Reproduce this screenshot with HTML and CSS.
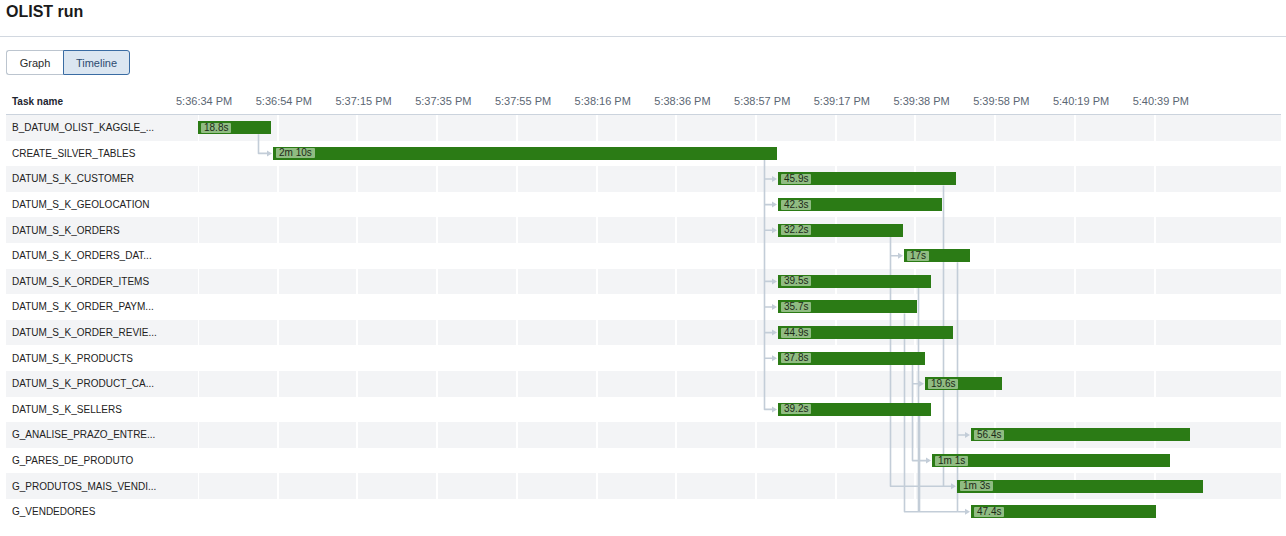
FILE: index.html
```html
<!DOCTYPE html>
<html>
<head>
<meta charset="utf-8">
<title>OLIST run</title>
<link rel="stylesheet" href="styles.css">
</head>
<body>
<header class="page-title"><h1>OLIST run</h1></header>
<div class="tabs">
  <button class="tab tab-graph">Graph</button>
  <button class="tab tab-timeline">Timeline</button>
</div>
<section class="timeline">
  <div class="thead">
    <div class="name-col th-name">Task name</div>
    <div class="ticks">
      <span class="tick">5:36:34 PM</span><span class="tick">5:36:54 PM</span><span class="tick">5:37:15 PM</span><span class="tick">5:37:35 PM</span><span class="tick">5:37:55 PM</span><span class="tick">5:38:16 PM</span><span class="tick">5:38:36 PM</span><span class="tick">5:38:57 PM</span><span class="tick">5:39:17 PM</span><span class="tick">5:39:38 PM</span><span class="tick">5:39:58 PM</span><span class="tick">5:40:19 PM</span><span class="tick">5:40:39 PM</span>
    </div>
  </div>
  <div class="rows">
    <svg class="links" width="1275" height="410" viewBox="6 115 1275 410" xmlns="http://www.w3.org/2000/svg">
      <g fill="none" stroke="#c3cdd8" stroke-width="1.6" stroke-linejoin="round">
        <path d="M258.5 134.3 V153.4 H267"/>
        <path d="M764.5 159.9 V409.4 H772"/>
        <path d="M764.5 179 H772 M764.5 204.6 H772 M764.5 230.2 H772 M764.5 281.4 H772 M764.5 307 H772 M764.5 332.6 H772 M764.5 358.2 H772"/>
        <path d="M890.5 236.7 V486.2 H951 M890.5 255.8 H898"/>
        <path d="M943.5 185.5 V486.2"/>
        <path d="M957.5 262.3 V511.8 H965 M957.5 435 H965"/>
        <path d="M918.5 287.9 V511.8"/>
        <path d="M904.5 313.5 V511.8 H957"/>
        <path d="M912.5 364.7 V460.6 H926 M912.5 383.8 H919"/>
        <path d="M919.5 415.9 V511.8"/>
      </g>
      <g fill="#c3cdd8">
        <polygon points="267,150.4 272,153.4 267,156.4"/>
        <polygon points="772,176 777,179 772,182"/>
        <polygon points="772,201.6 777,204.6 772,207.6"/>
        <polygon points="772,227.2 777,230.2 772,233.2"/>
        <polygon points="772,278.4 777,281.4 772,284.4"/>
        <polygon points="772,304 777,307 772,310"/>
        <polygon points="772,329.6 777,332.6 772,335.6"/>
        <polygon points="772,355.2 777,358.2 772,361.2"/>
        <polygon points="772,406.4 777,409.4 772,412.4"/>
        <polygon points="898,252.8 903,255.8 898,258.8"/>
        <polygon points="919,380.8 924,383.8 919,386.8"/>
        <polygon points="965,432 970,435 965,438"/>
        <polygon points="926,457.6 931,460.6 926,463.6"/>
        <polygon points="951,483.2 956,486.2 951,489.2"/>
        <polygon points="965,508.8 970,511.8 965,514.8"/>
      </g>
    </svg>
    <div class="row"><div class="name-col">B_DATUM_OLIST_KAGGLE_...</div><div class="chart"><div class="bar" style="margin-left:0px;width:73px"><span class="dur">18.8s</span></div></div></div>
    <div class="row"><div class="name-col">CREATE_SILVER_TABLES</div><div class="chart"><div class="bar" style="margin-left:75px;width:504px"><span class="dur">2m 10s</span></div></div></div>
    <div class="row"><div class="name-col">DATUM_S_K_CUSTOMER</div><div class="chart"><div class="bar" style="margin-left:580px;width:178px"><span class="dur">45.9s</span></div></div></div>
    <div class="row"><div class="name-col">DATUM_S_K_GEOLOCATION</div><div class="chart"><div class="bar" style="margin-left:580px;width:164px"><span class="dur">42.3s</span></div></div></div>
    <div class="row"><div class="name-col">DATUM_S_K_ORDERS</div><div class="chart"><div class="bar" style="margin-left:580px;width:125px"><span class="dur">32.2s</span></div></div></div>
    <div class="row"><div class="name-col">DATUM_S_K_ORDERS_DAT...</div><div class="chart"><div class="bar" style="margin-left:706px;width:66px"><span class="dur">17s</span></div></div></div>
    <div class="row"><div class="name-col">DATUM_S_K_ORDER_ITEMS</div><div class="chart"><div class="bar" style="margin-left:580px;width:153px"><span class="dur">39.5s</span></div></div></div>
    <div class="row"><div class="name-col">DATUM_S_K_ORDER_PAYM...</div><div class="chart"><div class="bar" style="margin-left:580px;width:139px"><span class="dur">35.7s</span></div></div></div>
    <div class="row"><div class="name-col">DATUM_S_K_ORDER_REVIE...</div><div class="chart"><div class="bar" style="margin-left:580px;width:175px"><span class="dur">44.9s</span></div></div></div>
    <div class="row"><div class="name-col">DATUM_S_K_PRODUCTS</div><div class="chart"><div class="bar" style="margin-left:580px;width:147px"><span class="dur">37.8s</span></div></div></div>
    <div class="row"><div class="name-col">DATUM_S_K_PRODUCT_CA...</div><div class="chart"><div class="bar" style="margin-left:727px;width:77px"><span class="dur">19.6s</span></div></div></div>
    <div class="row"><div class="name-col">DATUM_S_K_SELLERS</div><div class="chart"><div class="bar" style="margin-left:580px;width:153px"><span class="dur">39.2s</span></div></div></div>
    <div class="row"><div class="name-col">G_ANALISE_PRAZO_ENTRE...</div><div class="chart"><div class="bar" style="margin-left:773px;width:219px"><span class="dur">56.4s</span></div></div></div>
    <div class="row"><div class="name-col">G_PARES_DE_PRODUTO</div><div class="chart"><div class="bar" style="margin-left:734px;width:238px"><span class="dur">1m 1s</span></div></div></div>
    <div class="row"><div class="name-col">G_PRODUTOS_MAIS_VENDI...</div><div class="chart"><div class="bar" style="margin-left:759px;width:246px"><span class="dur">1m 3s</span></div></div></div>
    <div class="row"><div class="name-col">G_VENDEDORES</div><div class="chart"><div class="bar" style="margin-left:773px;width:185px"><span class="dur">47.4s</span></div></div></div>
  </div>
</section>
</body>
</html>
```

FILE: styles.css
```css
* { box-sizing: border-box; }
html, body { margin: 0; padding: 0; background: #fff; }
body {
  font-family: "Liberation Sans", Arial, sans-serif;
  color: #1f1f1f;
  width: 1286px;
  height: 536px;
  overflow: hidden;
}
.page-title {
  height: 37px;
  padding: 0 6px;
  border-bottom: 1px solid #d2d8e0;
}
.page-title h1 {
  margin: 0;
  font-size: 16px;
  line-height: 24px;
  font-weight: bold;
  color: #1a1a1a;
}
.tabs {
  display: flex;
  margin: 13px 0 0 6px;
  height: 25px;
}
.tab {
  font-family: "Liberation Sans", Arial, sans-serif;
  font-size: 11px;
  height: 25px;
  padding: 0;
  margin: 0;
  cursor: pointer;
  background: #fff;
}
.tab-graph {
  width: 57px;
  border: 1px solid #bcc5cf;
  border-right: none;
  border-radius: 3px 0 0 3px;
  color: #2b2b2b;
}
.tab-timeline {
  width: 67px;
  border: 1px solid #3a6ca3;
  border-radius: 0 3px 3px 0;
  background: #dbe6f1;
  color: #2d4b70;
}
.timeline {
  margin: 13px 5px 0 6px;
}
.thead {
  display: flex;
  height: 27px;
  align-items: center;
  border-bottom: 1px solid #cbd3dd;
}
.name-col {
  width: 192px;
  flex: none;
  padding-left: 6px;
  font-size: 10px;
  color: #222;
  white-space: nowrap;
  overflow: hidden;
}
.th-name {
  font-weight: bold;
  color: #1e2530;
}
.ticks {
  display: flex;
  margin-left: -22px;
}
.tick {
  width: 79.72px;
  flex: none;
  font-size: 11px;
  color: #5b6673;
  white-space: nowrap;
}
.rows {
  position: relative;
}
.links {
  position: absolute;
  left: 0;
  top: 0;
  z-index: 1;
  pointer-events: none;
}
.row {
  display: flex;
  align-items: center;
  height: 25.6px;
}
.row:nth-child(even) {
  background: #f3f4f6;
}
.chart {
  flex: 1;
  height: 100%;
  display: flex;
  align-items: center;
  background-image: repeating-linear-gradient(90deg, #ffffff 0 2px, transparent 2px 79.72px);
  background-size: 1030px 100%;
  background-repeat: no-repeat;
  background-position: -1px 0;
}
.bar {
  position: relative;
  z-index: 2;
  flex: none;
  height: 13px;
  background: #2b7b15;
  display: flex;
  align-items: center;
  padding-left: 3px;
  overflow: hidden;
}
.dur {
  background: #90bc82;
  color: #1c2a18;
  font-size: 10px;
  line-height: 10px;
  height: 10px;
  padding: 0 3px;
  border-radius: 1px;
  white-space: nowrap;
}
```
